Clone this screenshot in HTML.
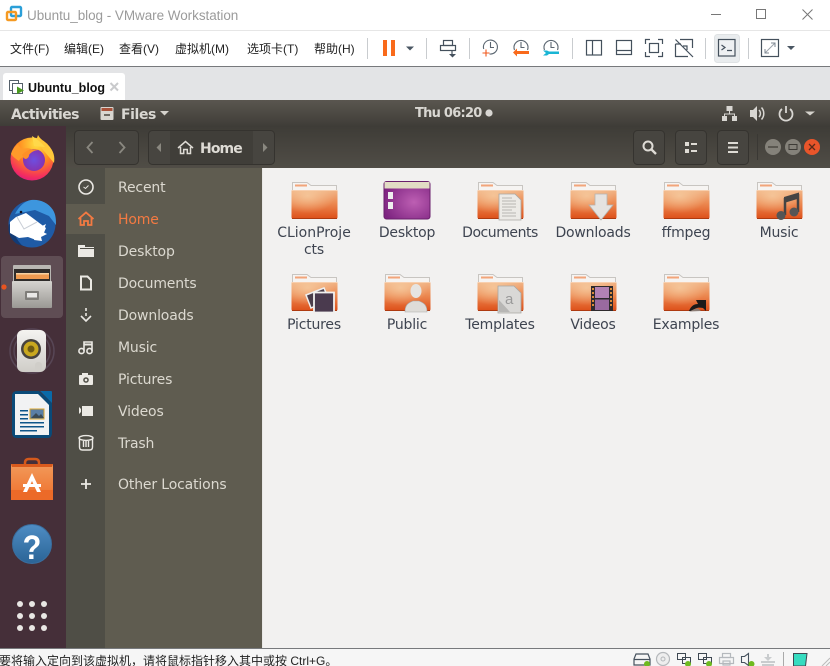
<!DOCTYPE html>
<html><head><meta charset="utf-8">
<style>
html,body{margin:0;padding:0;width:830px;height:666px;overflow:hidden;background:#fff}
body{position:relative;font-family:"DejaVu Sans","Liberation Sans",sans-serif}
.b{position:absolute}
.t{position:absolute;white-space:nowrap;line-height:1}
.m{font:12px "Liberation Sans","Noto Sans CJK SC",sans-serif;color:#222;top:40px}
.s{font-size:14px;color:#dcd9d0;left:118px;letter-spacing:-.15px}
.f{font-size:14px;color:#3e4450;width:90px;text-align:center;letter-spacing:-.2px}
svg{position:absolute;left:0;top:0}
</style></head><body>
<div class="b" style="left:0;top:30px;width:830px;height:1px;background:#e6e6e6"></div>
<div class="b" style="left:0;top:66px;width:830px;height:1px;background:#77797c"></div>
<div class="b" style="left:0;top:67px;width:830px;height:33px;background:#e3e4e6"></div>
<div class="b" style="left:3px;top:73px;width:122px;height:27px;background:#fff;border-radius:3px 3px 0 0"></div>
<div class="b" style="left:0;top:100px;width:830px;height:26px;background:linear-gradient(#5a564f,#3f3d38)"></div>
<div class="b" style="left:66px;top:126px;width:764px;height:42px;background:linear-gradient(#3e3c37,#504d46)"></div>
<div class="b" style="left:0;top:126px;width:66px;height:523px;background:#452f39"></div>
<div class="b" style="left:66px;top:168px;width:39px;height:481px;background:#4f4e46"></div>
<div class="b" style="left:105px;top:168px;width:157px;height:481px;background:#5f5c50"></div>
<div class="b" style="left:66px;top:204px;width:196px;height:30px;background:#5f5c50"></div>
<div class="b" style="left:262px;top:168px;width:568px;height:481px;background:#f2f1f0;border-left:1px solid #e9e8e6;box-sizing:border-box"></div>
<div class="b" style="left:0;top:648px;width:830px;height:1px;background:#77797c"></div>
<div class="b" style="left:0;top:649px;width:830px;height:17px;background:#f6f6f6"></div>

<svg width="830" height="666" viewBox="0 0 830 666">
<defs>
<linearGradient id="fg" x1="0" y1="0" x2="0" y2="1"><stop offset="0" stop-color="#f1b587"/><stop offset=".45" stop-color="#ec8a52"/><stop offset="1" stop-color="#dd4e18"/></linearGradient>
<radialGradient id="hl" cx=".35" cy=".2" r=".6"><stop offset="0" stop-color="#f7cfa4" stop-opacity=".75"/><stop offset="1" stop-color="#f7cfa4" stop-opacity="0"/></radialGradient>
<radialGradient id="purp" cx=".65" cy=".55" r=".7"><stop offset="0" stop-color="#bd5fb3"/><stop offset="1" stop-color="#7d2380"/></radialGradient>
<radialGradient id="ff1" cx=".6" cy=".15" r=".95"><stop offset="0" stop-color="#ffe040"/><stop offset=".45" stop-color="#ff8a1f"/><stop offset=".8" stop-color="#f5305c"/><stop offset="1" stop-color="#d4148c"/></radialGradient>
<radialGradient id="ff2" cx=".5" cy=".5" r=".6"><stop offset="0" stop-color="#6d4fe0"/><stop offset="1" stop-color="#8a2ea8"/></radialGradient>
<linearGradient id="cab" x1="0" y1="0" x2="0" y2="1"><stop offset="0" stop-color="#d6d4d0"/><stop offset="1" stop-color="#9a9894"/></linearGradient>
<linearGradient id="blue" x1="0" y1="0" x2="0" y2="1"><stop offset="0" stop-color="#4f8dc4"/><stop offset="1" stop-color="#2a6496"/></linearGradient>
<linearGradient id="sw" x1="0" y1="0" x2="0" y2="1"><stop offset="0" stop-color="#f29a5a"/><stop offset="1" stop-color="#ee6f2c"/></linearGradient>
<linearGradient id="spk" x1="0" y1="0" x2="0" y2="1"><stop offset="0" stop-color="#f4f3f0"/><stop offset="1" stop-color="#cfcdc8"/></linearGradient>
<symbol id="folder" width="48" height="40" viewBox="0 0 48 40">
<path d="M1.500 .5H16l4 3h25.500v9H1.500z" fill="#f6f4f2" stroke="#c8c5c1"/>
<rect x="4" y="2.500" width="12" height="2" fill="#f2a57a"/>
<path d="M.5 8H46.500V35q0 2-2 2H2.500q-2 0-2-2z" fill="url(#fg)"/>
<path d="M.5 8H46.500V35q0 2-2 2H2.500q-2 0-2-2z" fill="url(#hl)"/>
<path d="M1 36.500H46" stroke="#ae3a10" stroke-width="1"/>
<path d="M.5 8.500H46.500" stroke="#f8cfae" stroke-width="1"/>
</symbol>
</defs>

<!-- vmware logo -->
<rect x="11" y="7" width="10" height="9" fill="none" stroke="#2b9fd8" stroke-width="2.400" rx="1"/>
<rect x="7" y="12" width="9" height="8" fill="none" stroke="#f59a23" stroke-width="2.400" rx="1"/>
<!-- window buttons -->
<path d="M711 14.500H721" stroke="#777"/>
<rect x="756.500" y="9.500" width="9" height="9" fill="none" stroke="#777"/>
<path d="M802.500 9.500L812.500 19.500M812.500 9.500L802.500 19.500" stroke="#777"/>
<!-- separators -->
<g stroke="#c9cccf"><path d="M367.500 38V59M426.500 38V59M469.500 38V59M572.500 38V59M705.500 38V59M748.500 38V59"/></g>
<!-- pause -->
<rect x="383" y="40" width="4" height="16" fill="#f96a1b"/><rect x="391" y="40" width="4" height="16" fill="#f96a1b"/>
<path d="M406 46.500h8l-4 4z" fill="#4a5663"/>
<!-- send -->
<g fill="none" stroke="#44505c" stroke-width="1.200"><rect x="443.500" y="40.500" width="9" height="5"/><rect x="440.500" y="45.500" width="15" height="5"/><path d="M452 51V55"/></g>
<path d="M449 54h7l-3.500 3.500z" fill="#44505c"/>
<!-- snapshots -->
<g fill="none" stroke="#5a6570" stroke-width="1.100">
<path d="M483.700 49A7 7 0 1 1 489.500 54M490.500 42V47.500H494"/>
<path d="M514.500 50A7 7 0 1 1 527.500 50M521 42V47.500H524.500"/>
<path d="M544.500 50A7 7 0 1 1 557.500 50M551 42V47.500H554.500"/>
</g>
<path d="M486 49.500v7M482.500 53h7" stroke="#f0581c" stroke-width="1.100"/>
<path d="M517 51H529V54H517V56.500L513 52.500 517 48.500z" fill="#f96a1b"/>
<path d="M543 50.500H547L549 51.500H559V54H549L547 55.500H543L546 53z" fill="#19b5d4"/>
<!-- layouts -->
<g fill="none" stroke="#44505c" stroke-width="1.200">
<rect x="586.500" y="40.500" width="15" height="14.500"/><path d="M592.500 40.500V55"/>
<rect x="616.500" y="40.500" width="15" height="14"/><path d="M616.500 50.500H631.500"/>
<path d="M645.500 44V39.500H650M658 39.500H662.500V44M645.500 52V56.500H650M658 56.500H662.500V52"/><rect x="649.500" y="43.500" width="9" height="9"/>
<path d="M675.500 39.500L693 57"/><path d="M680 39.500H692.500V48M675.500 44V56.500H688M675.500 44H681M687 50V46H683"/>
</g>
<!-- terminal -->
<rect x="714.500" y="34.500" width="25" height="28" rx="3" fill="#e9ecee" stroke="#dfe2e4"/>
<rect x="718.500" y="39.500" width="16.500" height="16.500" stroke="#44505c" stroke-width="1.200" fill="#eef0f2"/>
<path d="M721.500 45l3.500 2.500-3.500 2.500M727 50.500h5" fill="none" stroke="#44505c" stroke-width="1.200"/>
<!-- fullscreen -->
<rect x="761.500" y="39.500" width="17" height="17" fill="none" stroke="#44505c" stroke-width="1.200"/>
<path d="M765 53L775 43" stroke="#9aa2aa"/><path d="M771 43h4v4M765 49v4h4" fill="none" stroke="#7d8790"/>
<path d="M787 46h8l-4 4z" fill="#4a5663"/>
<!-- tab icon -->
<g fill="none" stroke="#55606a"><rect x="9.500" y="80.500" width="9" height="10"/><rect x="12.500" y="83.500" width="10" height="10" fill="#fff"/></g>
<path d="M17 86.500L24 90.500 17 94z" fill="#4a9a1f"/>
<path d="M110.500 83L118 90.500M118 83L110.500 90.500" stroke="#c9cacc" stroke-width="2"/>

<!-- top bar icons -->
<rect x="100.500" y="107" width="13" height="13" rx="1" fill="#d9d6d0"/><rect x="101.500" y="108" width="11" height="3" fill="#a9523a"/><rect x="104" y="114" width="6" height="2" fill="#6e6a63"/>
<path d="M160 111h9l-4.500 4.500z" fill="#d5d2cc"/>
<circle cx="489" cy="113" r="3.600" fill="#d8d6d2"/>
<g fill="#d8d6d2"><rect x="726.500" y="106" width="6" height="5"/><rect x="722" y="116" width="5" height="5"/><rect x="732" y="116" width="5" height="5"/></g>
<path d="M729.500 111v3M724.500 116v-2h10v2" fill="none" stroke="#d8d6d2"/>
<path d="M750 110h3l4-4v15l-4-4h-3z" fill="#d8d6d2"/><path d="M759 110a5 5 0 0 1 0 7M761.500 107.500a9 9 0 0 1 0 12" fill="none" stroke="#d8d6d2" stroke-width="1.500"/>
<path d="M782 109a6.500 6.500 0 1 0 8 0" fill="none" stroke="#d8d6d2" stroke-width="1.800"/><path d="M786 106V113" stroke="#d8d6d2" stroke-width="1.800"/>
<path d="M805 111.500h10l-5 4z" fill="#d5d2cc"/>

<!-- header buttons -->
<g fill="#474540" stroke="#35332f">
<rect x="74.500" y="130.500" width="64" height="34" rx="4"/>
<rect x="148.500" y="130.500" width="126" height="34" rx="4"/>
<rect x="633.500" y="130.500" width="31" height="34" rx="4"/>
<rect x="675.500" y="130.500" width="31" height="34" rx="4"/>
<rect x="717.500" y="130.500" width="31" height="34" rx="4"/>
</g>
<rect x="170" y="131" width="83" height="33" fill="#403e39"/>
<path d="M92.500 142l-5 5.500 5 5.500M119.500 142l5 5.500-5 5.500" fill="none" stroke="#8a8880" stroke-width="1.800"/>
<path d="M161 143v9l-4.500-4.500zM263 143v9l4.500-4.500z" fill="#8a8880"/>
<path d="M178 148l7.500-6.500 7.500 6.500M180.500 147v6.500h3.200v-4h3.600v4h3.200V147" fill="none" stroke="#dedbd5" stroke-width="1.500"/>
<circle cx="648" cy="146" r="4.500" fill="none" stroke="#dedbd5" stroke-width="2"/><path d="M651.500 149.500l4.500 4.500" stroke="#dedbd5" stroke-width="2.400"/>
<g fill="#dedbd5"><rect x="685" y="142" width="4" height="4"/><rect x="685" y="149" width="4" height="4"/><rect x="691" y="143" width="6" height="2"/><rect x="691" y="150" width="6" height="2"/></g>
<g fill="#dedbd5"><rect x="728" y="142" width="10" height="2"/><rect x="728" y="146.500" width="10" height="2"/><rect x="728" y="151" width="10" height="2"/></g>
<path d="M757.500 134V160" stroke="#3a3834"/>
<circle cx="773" cy="147" r="8" fill="#85827a"/><path d="M768 147h10" stroke="#3d3b36" stroke-width="1.200"/>
<circle cx="793" cy="147" r="8" fill="#85827a"/><rect x="789" y="144.500" width="8" height="5" fill="none" stroke="#3d3b36"/>
<circle cx="812" cy="147" r="8" fill="#e9552a"/><path d="M809 144l6 6M815 144l-6 6" stroke="#5a2a18" stroke-width="1.300"/>

<!-- dock -->
<rect x="1" y="256" width="62" height="62" rx="4" fill="#5f4d54"/>
<circle cx="4" cy="287" r="2.600" fill="#e95420"/>
<!-- firefox -->
<circle cx="32" cy="159" r="21.500" fill="url(#ff1)"/>
<path d="M38 135c2 4 6 6 10 10 6 6 7 12 6 18l-10-12-8-10z" fill="#ffc83a"/>
<path d="M32 136c3 2 8 5 13 11l-11-1z" fill="#ffd84a"/>
<path d="M11 154c1-4 4-8 7-10 1 3 3 4 5 5 3-1 6-1 8 0l-6 7c-2 1-5 2-6 5-3-2-6-4-8-7z" fill="#ff9a2a"/>
<circle cx="34" cy="160" r="11" fill="url(#ff2)"/>
<path d="M22 155c4-5 11-7 17-5-4 0-8 2-10 5 0 2-1 3-3 4-2 0-3-2-4-4z" fill="#ff8f26"/>
<!-- thunderbird -->
<circle cx="32" cy="224" r="23.500" fill="#1f5ba6"/>
<path d="M15 214c4-8 10-13 16-14 8-1 17 2 22 10 3 5 3 10 3 15l-7-9-14-6z" fill="#3d96de"/>
<path d="M9 224c-2 8 2 16 8 20l6 2c-4-3-9-10-10-20z" fill="#123b75"/>
<path d="M10 222l6-5 10-4 12 9 8 6-3 7-7 5-8-3-9 1-9-5z" fill="#fff"/>
<path d="M17 217l7 12 13-7" fill="none" stroke="#c9ced6" stroke-width="1"/>
<path d="M38 228l8-4-3 8 4 2-6 3 1 4-8-1z" fill="#fff"/>
<circle cx="21" cy="212" r="1.300" fill="#112"/>
<!-- files -->
<path d="M13 266q0-1 1-1H50q1 0 1 1V282H13z" fill="#b9b7b3"/>
<rect x="14" y="269" width="36" height="12" fill="#2f2c2a"/>
<rect x="16" y="273" width="33" height="6" fill="#ee9a50"/><rect x="16" y="273" width="33" height="1.500" fill="#f6d0a0"/>
<rect x="12" y="281" width="40" height="27" rx="1" fill="url(#cab)"/>
<rect x="25" y="291" width="14" height="9" rx="1" fill="#7f7d79"/><rect x="27" y="293" width="10" height="4.500" fill="#e9e8e6"/>
<!-- rhythmbox -->
<circle cx="32" cy="351" r="22" fill="none" stroke="#574655" stroke-width="1.500"/>
<circle cx="32" cy="351" r="18" fill="none" stroke="#574655" stroke-width="1.500"/>
<rect x="17" y="330" width="29" height="42" rx="6" fill="url(#spk)"/>
<circle cx="31" cy="349" r="10" fill="#47433f"/>
<circle cx="31" cy="349" r="7.500" fill="#c9a81f"/><circle cx="31" cy="349" r="3.500" fill="#6e5a14"/>
<rect x="35" y="362" width="7" height="9" rx="3" fill="#d0cec9"/>
<!-- writer -->
<path d="M12 396q0-5 5-5H39L52 403V433q0 5-5 5H17q-5 0-5-5z" fill="#0a4a78"/>
<path d="M15 394H38L49 405V435H15z" fill="#f1f2f3"/>
<path d="M40 391h11q1 0 1 1v11z" fill="#0a6aa8"/>
<g fill="#0e5589"><rect x="20" y="410" width="8" height="1.500"/><rect x="20" y="414" width="8" height="1.500"/><rect x="20" y="418" width="8" height="1.500"/><rect x="20" y="422" width="24" height="1.500"/><rect x="20" y="426" width="24" height="1.500"/><rect x="20" y="430" width="17" height="1.500"/></g>
<rect x="30" y="409" width="14" height="10" fill="#5a7fa6" stroke="#dba52e"/><path d="M31 418l5-5 3 3 2-2 3 4z" fill="#3a4a55"/>
<!-- software -->
<path d="M25 468v-5q0-4 4-4h6q4 0 4 4v5" fill="none" stroke="#d4591c" stroke-width="2.500"/>
<path d="M11 464H53V500H11z" fill="url(#sw)"/>
<path d="M11 464H53l-1 3H12z" fill="#d95a1d"/>
<rect x="11" y="490" width="42" height="10" fill="#ec6a28"/>
<path d="M32 473l-9 19h4l5-11 5 11h4z" fill="#fff"/><rect x="23" y="484" width="18" height="3" fill="#fff"/>
<!-- help -->
<circle cx="32" cy="544" r="19.500" fill="url(#blue)" stroke="#3a6e9e"/>
<!-- apps grid -->
<g fill="#e9e7e4"><circle cx="20" cy="604" r="3"/><circle cx="32" cy="604" r="3"/><circle cx="44" cy="604" r="3"/><circle cx="20" cy="616" r="3"/><circle cx="32" cy="616" r="3"/><circle cx="44" cy="616" r="3"/><circle cx="20" cy="628" r="3"/><circle cx="32" cy="628" r="3"/><circle cx="44" cy="628" r="3"/></g>

<!-- sidebar icons -->
<g fill="none" stroke="#ebe9e4" stroke-width="1.600">
<circle cx="86" cy="187" r="7"/><path d="M83.500 187l2 1.500 3-3" stroke-width="1"/>
<path d="M81 276.500h6.500l3.500 3.500v9.500H81z" stroke-width="2"/>
</g>
<path d="M78.500 219l7.500-6.500 7.500 6.500M80.500 218v7h3.500v-4h4v4h3.500v-7" fill="none" stroke="#f47a42" stroke-width="1.800"/>
<g fill="#ebe9e4"><path d="M78 245h7v2h9v10H78z"/></g><rect x="80" y="248" width="14" height="1" fill="#4f4e46"/>
<path d="M86 308v3M86 313v3" stroke="#ebe9e4" stroke-width="1.600"/><path d="M81 316l5 5 5-5" fill="none" stroke="#ebe9e4" stroke-width="1.600"/>
<g fill="none" stroke="#ebe9e4" stroke-width="1.600"><circle cx="81.500" cy="351" r="2.600"/><circle cx="89.500" cy="351" r="2.600"/><path d="M84 351v-9h8v9"/><path d="M84 344.500h8" stroke-width="2"/></g>
<rect x="79" y="375" width="14" height="10" rx="1" fill="#ebe9e4"/><rect x="82" y="373" width="6" height="3" fill="#ebe9e4"/><circle cx="86" cy="380" r="2.800" fill="#4f4e46"/><circle cx="86" cy="380" r="1.300" fill="#ebe9e4"/>
<rect x="82" y="406" width="11" height="10" fill="#ebe9e4"/><path d="M79 407l2 2v3l-2 2z" fill="#ebe9e4"/>
<g fill="none" stroke="#ebe9e4" stroke-width="1.400"><ellipse cx="86" cy="438" rx="7" ry="2.400"/><path d="M79.500 439v8q0 3 3 3h7q3 0 3-3v-8M83.500 441v6M86 441v6M88.500 441v6"/></g>
<path d="M81 484h10M86 479v10" stroke="#ebe9e4" stroke-width="1.800"/>

<!-- folders -->
<use href="#folder" x="291" y="182" width="48" height="40"/>
<rect x="384" y="181.500" width="46" height="37.500" rx="2.500" fill="url(#purp)" stroke="#6a1f6c"/>
<rect x="384.500" y="182" width="45" height="6.500" fill="#e2dcc4"/>
<rect x="388" y="192" width="5" height="7" fill="#eee"/><rect x="388" y="202" width="5" height="7" fill="#eee"/>
<use href="#folder" x="477" y="182" width="48" height="40"/>
<use href="#folder" x="570" y="182" width="48" height="40"/>
<use href="#folder" x="663" y="182" width="48" height="40"/>
<use href="#folder" x="756" y="182" width="48" height="40"/>
<use href="#folder" x="291" y="274" width="48" height="40"/>
<use href="#folder" x="384" y="274" width="48" height="40"/>
<use href="#folder" x="477" y="274" width="48" height="40"/>
<use href="#folder" x="570" y="274" width="48" height="40"/>
<use href="#folder" x="663" y="274" width="48" height="40"/>

<!-- documents overlay -->
<path d="M499 194H515L521 200V220H499z" fill="#eceae6" stroke="#a9a7a3" stroke-width=".8"/>
<g stroke="#a8a6a2" stroke-width=".8"><path d="M502 198h10M502 201h14M502 204h14M502 207h14M502 210h10M502 213h14M502 216h14"/></g>
<!-- downloads overlay -->
<path d="M595 194H607V205H613L601 220 589 205H595z" fill="#e5e3e0" stroke="#b5b3af" stroke-width=".8"/>
<!-- music overlay -->
<path d="M785 215V198M798 212V194" stroke="#444" stroke-width="2.500"/><path d="M784 197l15-4.500v6l-15 4.500z" fill="#444"/>
<circle cx="781" cy="215.500" r="4.500" fill="#555"/><circle cx="794" cy="212" r="4.500" fill="#555"/>
<!-- pictures overlay -->
<path d="M306 295l18-7 5 12-18 8z" fill="#4a3d4a" stroke="#eee" stroke-width="1.500"/>
<rect x="314" y="292.500" width="20" height="20" fill="#4a3a4e" stroke="#f1f0ee" stroke-width="1.800"/>
<!-- public overlay -->
<ellipse cx="416" cy="291" rx="5.500" ry="7" fill="#e6e4e1"/>
<path d="M405 312c0-7 3-9 8-11h6c5 2 8 4 8 11z" fill="#dedcd8" stroke="#aaa" stroke-width=".6"/>
<!-- templates overlay -->
<path d="M498 286H514L521 293V313H498z" fill="#d9d8d6" stroke="#a9a7a3" stroke-width=".8"/>
<text x="505" y="304" font-family="Liberation Sans,sans-serif" font-size="15" fill="#9a9a9a">a</text>
<path d="M499 300V312H510z" fill="#b7b6b4"/>
<!-- videos overlay -->
<rect x="591" y="286" width="22" height="25" fill="#2e2a2c"/><rect x="595" y="287" width="14" height="11" fill="#b282b4"/><rect x="595" y="299.500" width="14" height="10.500" fill="#9a6aa0"/>
<g fill="#d98a3a"><rect x="592" y="288" width="2" height="2"/><rect x="592" y="292" width="2" height="2"/><rect x="592" y="296" width="2" height="2"/><rect x="592" y="300" width="2" height="2"/><rect x="592" y="304" width="2" height="2"/><rect x="610" y="288" width="2" height="2"/><rect x="610" y="292" width="2" height="2"/><rect x="610" y="296" width="2" height="2"/><rect x="610" y="300" width="2" height="2"/><rect x="610" y="304" width="2" height="2"/></g>
<!-- examples overlay -->
<path d="M689 311c2-5 5-7 9-7l-2-4h10v11l-3-3c-5-1-8 0-11 3z" fill="#1c1a1a"/>
<path d="M689 311.500c3-1 5-3 9-3l3 2.500z" fill="#8d7d75"/>

<!-- status icons -->
<g fill="none" stroke="#46525e" stroke-width="1.200"><path d="M636 654h12l2 5v6h-16v-6zM634 659.500h16"/></g>
<circle cx="647" cy="664" r="3" fill="#6fba1f"/>
<circle cx="663" cy="659" r="6.500" fill="#eee" stroke="#b5b8bb" stroke-width="1.200"/><circle cx="663" cy="659" r="2" fill="none" stroke="#b5b8bb"/>
<g fill="none" stroke="#3e4852"><rect x="677.500" y="653.500" width="8" height="6"/><rect x="682.500" y="657.500" width="8" height="6"/><rect x="698.500" y="653.500" width="8" height="6"/><rect x="703.500" y="657.500" width="8" height="6"/></g>
<circle cx="688" cy="664" r="3" fill="#6fba1f"/><circle cx="709" cy="664" r="3" fill="#6fba1f"/>
<g fill="none" stroke="#b5b9bd" stroke-width="1.200"><rect x="722.500" y="653.500" width="8" height="4"/><rect x="719.500" y="657.500" width="14" height="6"/><rect x="723" y="661" width="7" height="4"/></g>
<path d="M741.500 656.500h3l4-3v12l-4-3h-3z" fill="none" stroke="#46525e" stroke-width="1.100"/><circle cx="751.500" cy="664" r="3" fill="#6fba1f"/>
<g fill="#c9ccce"><rect x="767" y="654" width="2" height="6"/><path d="M764 657h8l-4 4z"/><rect x="761" y="661" width="14" height="2"/><rect x="762" y="664" width="12" height="2"/></g>
<path d="M783.500 652V666" stroke="#aaa"/>
<path d="M793.500 653.500H807L805.500 666H793.500z" fill="#36dcc0" stroke="#3e4852"/>
<path d="M822 666L830 658M826 666L830 662" stroke="#bbb"/>
</svg>

<div class="t" style="left:27px;top:8px;font:13.500px 'Liberation Sans',sans-serif;color:#9b9b9b;letter-spacing:-.05px">Ubuntu_blog - VMware Workstation</div>
<div class="t m" style="left:10px">文件(F)</div>
<div class="t m" style="left:64px">编辑(E)</div>
<div class="t m" style="left:119px">查看(V)</div>
<div class="t m" style="left:175px">虚拟机(M)</div>
<div class="t m" style="left:247px">选项卡(T)</div>
<div class="t m" style="left:314px">帮助(H)</div>
<div class="t" style="left:28px;top:81px;font:bold 12.500px 'Liberation Sans',sans-serif;color:#111">Ubuntu_blog</div>
<div class="t" style="left:11px;top:108px;font-size:14px;font-weight:bold;color:#d9d7d2;letter-spacing:-.6px">Activities</div>
<div class="t" style="left:121px;top:108px;font-size:14px;font-weight:bold;color:#d9d7d2;letter-spacing:-.4px">Files</div>
<div class="t" style="left:415px;top:107px;font-size:13px;font-weight:bold;color:#d9d7d2;letter-spacing:-.75px">Thu 06:20</div>
<div class="t" style="left:200px;top:142px;font-size:14px;font-weight:bold;color:#dedbd5;letter-spacing:-.9px">Home</div>
<div class="t" style="left:12px;top:529px;width:40px;text-align:center;font:bold 34px 'Liberation Sans',sans-serif;color:#fff;transform:scaleX(.9)">?</div>

<div class="t s" style="top:181px">Recent</div>
<div class="t s" style="top:213px;color:#f47a42">Home</div>
<div class="t s" style="top:245px">Desktop</div>
<div class="t s" style="top:277px">Documents</div>
<div class="t s" style="top:309px">Downloads</div>
<div class="t s" style="top:341px">Music</div>
<div class="t s" style="top:373px">Pictures</div>
<div class="t s" style="top:405px">Videos</div>
<div class="t s" style="top:437px">Trash</div>
<div class="t s" style="top:478px">Other Locations</div>

<div class="t f" style="left:269px;top:226px;letter-spacing:0">CLionProje</div>
<div class="t f" style="left:269px;top:243px">cts</div>
<div class="t f" style="left:362px;top:226px">Desktop</div>
<div class="t f" style="left:455px;top:226px;letter-spacing:-.45px">Documents</div>
<div class="t f" style="left:548px;top:226px">Downloads</div>
<div class="t f" style="left:641px;top:226px">ffmpeg</div>
<div class="t f" style="left:734px;top:226px">Music</div>
<div class="t f" style="left:269px;top:318px">Pictures</div>
<div class="t f" style="left:362px;top:318px">Public</div>
<div class="t f" style="left:455px;top:318px">Templates</div>
<div class="t f" style="left:548px;top:318px">Videos</div>
<div class="t f" style="left:641px;top:318px">Examples</div>

<div class="t" style="left:-1px;top:652px;font:12px 'Liberation Sans','Noto Sans CJK SC',sans-serif;color:#222">要将输入定向到该虚拟机，请将鼠标指针移入其中或按 Ctrl+G。</div>
</body></html>
